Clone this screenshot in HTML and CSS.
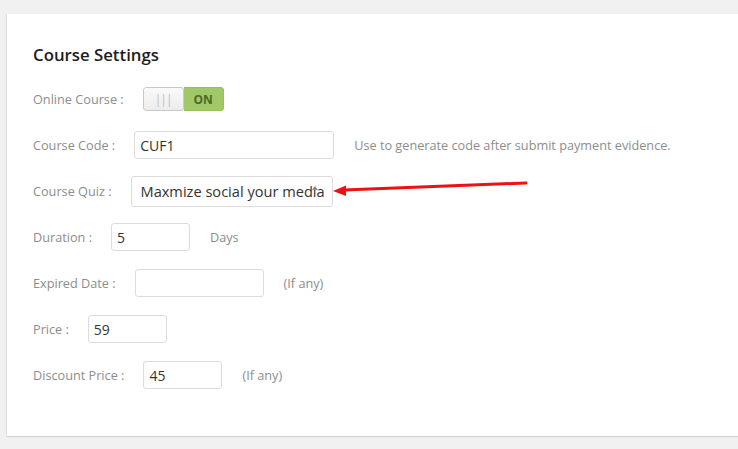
FILE: index.html
```html
<!DOCTYPE html>
<html>
<head>
<meta charset="utf-8">
<link rel="stylesheet" href="styles.css">
</head>
<body>
<div class="card">
  <h2 class="title">Course Settings</h2>
  <div class="row">
    <span class="label">Online Course :</span>
    <div class="toggle">
      <span class="knob">|||</span>
      <span class="on">ON</span>
    </div>
  </div>
  <div class="row">
    <span class="label">Course Code :</span>
    <input class="field w200" type="text" value="CUF1">
    <span class="help">Use to generate code after submit payment evidence.</span>
  </div>
  <div class="row">
    <span class="label">Course Quiz :</span>
    <div class="field select"><span class="seltext">Maxmize social your media</span><span class="caret"></span></div>
  </div>
  <div class="row">
    <span class="label">Duration :</span>
    <input class="field w79" type="text" value="5">
    <span class="help">Days</span>
  </div>
  <div class="row">
    <span class="label">Expired Date :</span>
    <input class="field w129" type="text" value="">
    <span class="help">(If any)</span>
  </div>
  <div class="row">
    <span class="label">Price :</span>
    <input class="field w79" type="text" value="59">
  </div>
  <div class="row">
    <span class="label">Discount Price :</span>
    <input class="field w79" type="text" value="45">
    <span class="help">(If any)</span>
  </div>
</div>
<svg class="arrow" width="738" height="449" viewBox="0 0 738 449">
  <line x1="526" y1="183" x2="344" y2="190" stroke="#ee1111" stroke-width="3" stroke-linecap="round"/>
  <polygon points="333,191 346,185.5 346,196" fill="#ee1111"/>
</svg>
</body>
</html>
```
FILE: styles.css
```css
* { box-sizing: border-box; }
html, body { margin: 0; padding: 0; }
body {
  background: #f1f1f1;
  font-family: "Open Sans", "Noto Sans", sans-serif;
  width: 738px;
  height: 449px;
  overflow: hidden;
  position: relative;
  padding: 14px 0 0 7px;
}
.card {
  background: #fff;
  width: 760px;
  height: 422px;
  box-shadow: 0 1px 1px rgba(0,0,0,0.12), -1px 0 1px rgba(0,0,0,0.05);
  padding: 30px 0 0 26px;
}
.title {
  margin: 0 0 10px 0;
  font-size: 16.8px;
  font-weight: 600;
  line-height: 22px;
  color: #1d1d1d;
}
.row {
  height: 46px;
  display: flex;
  align-items: center;
}
.label {
  font-size: 12.7px;
  color: #8d8d8d;
  margin-right: 19px;
}
.help {
  font-size: 12.7px;
  color: #8d8d8d;
  margin-left: 20px;
}
.field {
  height: 28px;
  border: 1px solid #dcdcdc;
  border-radius: 3px;
  font-family: "Open Sans", "Noto Sans", sans-serif;
  font-size: 14px;
  color: #333;
  padding: 0 5px;
  outline: none;
  background: #fff;
}
.w200 { width: 200px; }
.w79 { width: 79px; }
.w129 { width: 129px; }
.select {
  position: relative;
  width: 202px;
  height: 31px;
  font-size: 14.6px;
  line-height: 29px;
  padding: 0 9px;
  white-space: nowrap;
  overflow: hidden;
  color: #333;
}
.seltext { position: relative; }
.caret {
  position: absolute;
  right: 14px;
  top: 9px;
  width: 0;
  height: 0;
  border-left: 3px solid transparent;
  border-right: 3px solid transparent;
  border-bottom: 4px solid #888;
}
.toggle {
  display: flex;
  width: 81px;
  height: 24px;
  border-radius: 3px;
  overflow: hidden;
}
.knob {
  width: 41px;
  height: 24px;
  background: linear-gradient(#fafafa, #ececec);
  border: 1px solid #c9c9c9;
  border-radius: 3px;
  color: #bdbdbd;
  font-size: 12px;
  letter-spacing: -1px;
  display: flex;
  align-items: center;
  justify-content: center;
  box-shadow: 0 1px 1px rgba(0,0,0,0.08);
}
.on {
  flex: 1;
  background: #a0c866;
  border: 1px solid #96c05a;
  border-left: none;
  border-radius: 0 3px 3px 0;
  color: #4b6a26;
  font-size: 12px;
  font-weight: 700;
  display: flex;
  align-items: center;
  justify-content: center;
}
.arrow {
  position: absolute;
  left: 0;
  top: 0;
  pointer-events: none;
}
```
